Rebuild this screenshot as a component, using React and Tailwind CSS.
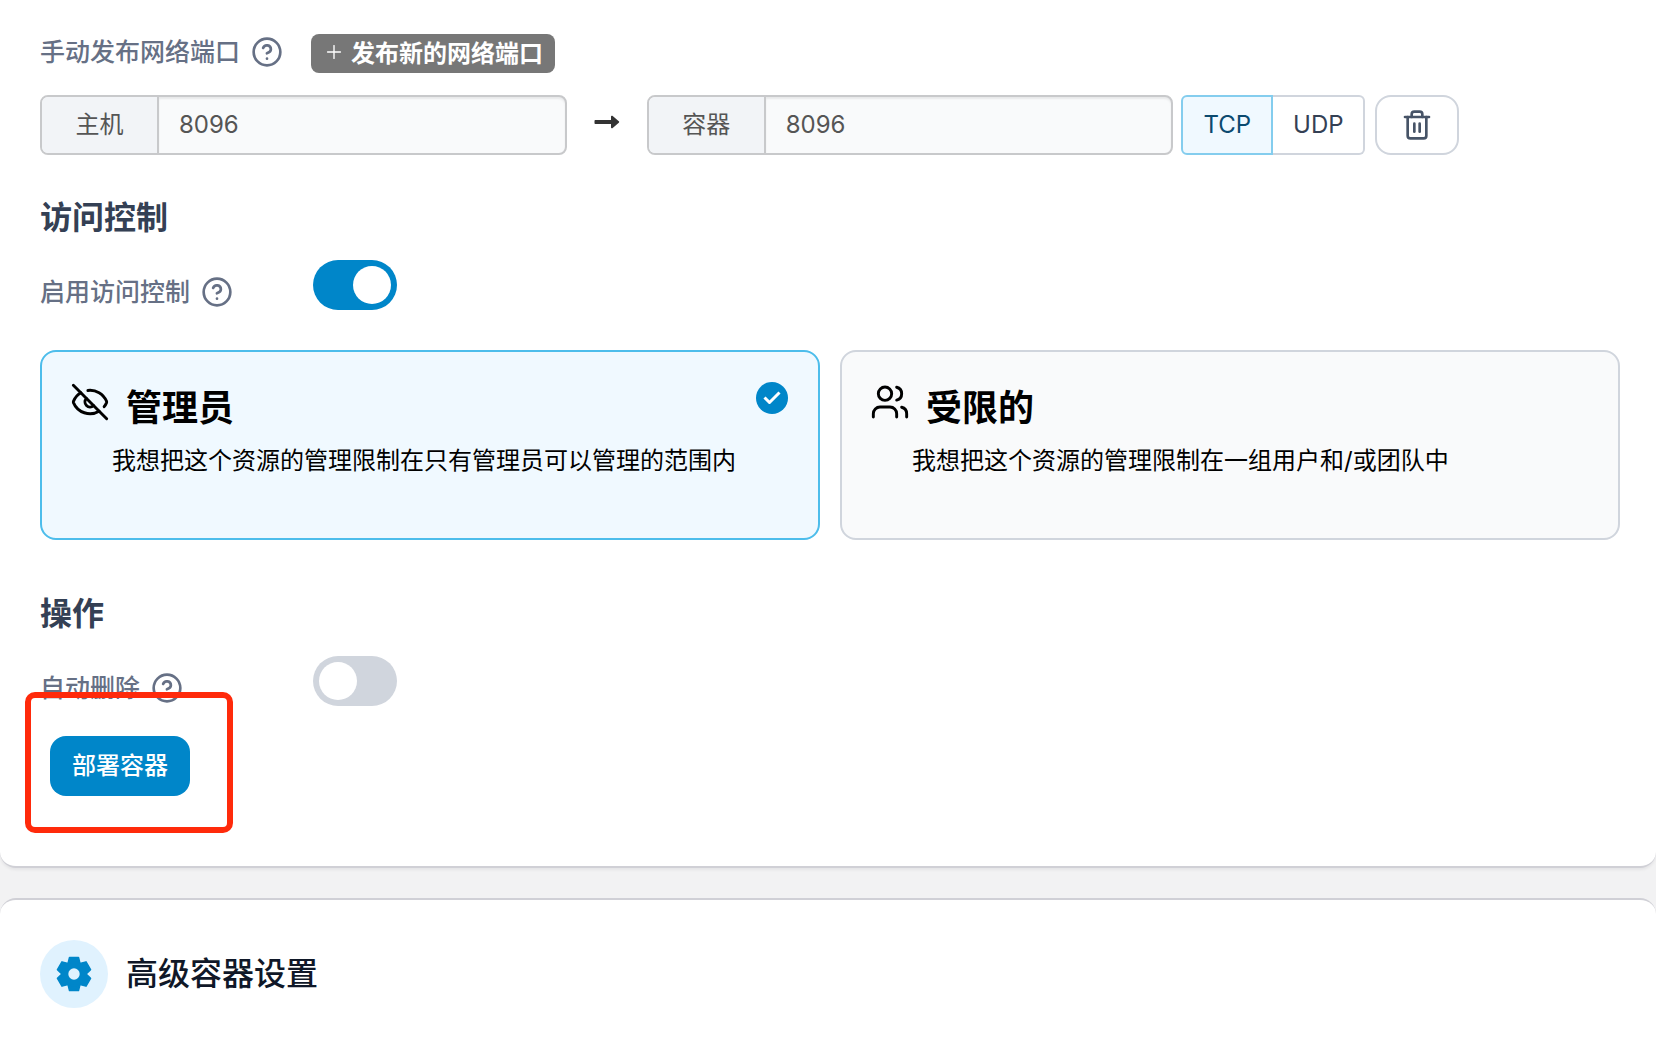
import { useState } from "react";
import { CircleHelp, EyeOff, Plus, Trash2, Users } from "lucide-react";

function FieldLabel({ htmlFor, children }) {
  return (
    <div className="flex items-center gap-[11px] text-[#667085]">
      <label htmlFor={htmlFor} className="text-[25px] leading-9 font-medium">
        {children}
      </label>
      <CircleHelp size={32} strokeWidth={2} />
    </div>
  );
}

function PortInput({ id, label, value, onChange }) {
  return (
    <div className="flex h-15 w-1/3 rounded-lg border-2 border-[#c8c9cb] bg-[#f9fafb] text-2xl text-[#555555]">
      <label
        htmlFor={id}
        className="flex w-[117px] shrink-0 items-center justify-center rounded-l-md border-r-2 border-[#c8c9cb] bg-[#f2f4f7]"
      >
        {label}
      </label>
      <input
        id={id}
        type="text"
        value={value}
        onChange={(e) => onChange(e.target.value)}
        className="min-w-0 flex-1 rounded-r-md px-5 shadow-[inset_0_2px_2px_rgba(0,0,0,0.07)] outline-none"
      />
    </div>
  );
}

function Toggle({ id, checked, onChange }) {
  return (
    <span className="relative inline-flex h-[50px] w-[84px]">
      <input
        id={id}
        type="checkbox"
        role="switch"
        checked={checked}
        onChange={(e) => onChange(e.target.checked)}
        className="peer h-full w-full cursor-pointer appearance-none rounded-full bg-[#d0d5dd] checked:bg-[#0086c9]"
      />
      <span className="pointer-events-none absolute top-1.5 left-1.5 size-[38px] rounded-full bg-white peer-checked:right-1.5 peer-checked:left-auto" />
    </span>
  );
}

function CheckBadge() {
  return (
    <svg viewBox="0 0 32 32" className="size-8 shrink-0" aria-hidden="true">
      <circle cx="16" cy="16" r="16" fill="#0086c9" />
      <path
        d="M8.500 15.500l5 5 10-10"
        fill="none"
        stroke="#fff"
        strokeWidth="3"
        strokeLinejoin="round"
      />
    </svg>
  );
}

function GearIcon() {
  // two opposite teeth per bar, turned three times
  const bar = "M13.500 1.500h9l1.500 6v21l-1.500 6h-9l-1.500-6v-21z";

  return (
    <svg viewBox="0 0 36 36" className="size-9" aria-hidden="true">
      <g fill="#0086c9" stroke="#0086c9" strokeWidth="1.5" strokeLinejoin="round">
        <path d={bar} />
        <path d={bar} transform="rotate(60 18 18)" />
        <path d={bar} transform="rotate(120 18 18)" />
        <circle cx="18" cy="18" r="11.5" />
      </g>
      <circle cx="18" cy="18" r="5.7" fill="#e0f2fe" />
    </svg>
  );
}

function AccessOption({ icon: Icon, value, title, body, selected, onSelect }) {
  return (
    <label
      className={
        selected
          ? "relative flex h-[190px] flex-1 cursor-pointer items-start rounded-2xl border-2 border-[#4dbdeb] bg-[#f0f9ff] py-[30px] pr-[30px] pl-7 text-black"
          : "relative flex h-[190px] flex-1 cursor-pointer items-start rounded-2xl border-2 border-[#d0d5dd] bg-[#f9fafb] py-[30px] pr-[30px] pl-7 text-black"
      }
    >
      <input
        type="radio"
        name="ownership"
        value={value}
        checked={selected}
        onChange={() => onSelect(value)}
        className="sr-only"
      />
      <span className="flex-1">
        <span className="flex items-start gap-4">
          <Icon size={40} strokeWidth={1.75} />
          <span className="pt-1 text-[36px] leading-[44px] font-bold">{title}</span>
        </span>
        <span className="mt-[15px] block pl-[42px] text-2xl leading-8">{body}</span>
      </span>
      {selected && <CheckBadge />}
    </label>
  );
}

export default function App() {
  const [hostPort, setHostPort] = useState("8096");
  const [containerPort, setContainerPort] = useState("8096");
  const [protocol, setProtocol] = useState("TCP");
  const [accessControl, setAccessControl] = useState(true);
  const [autoRemove, setAutoRemove] = useState(false);
  const [ownership, setOwnership] = useState("administrators");

  const options = [
    {
      value: "administrators",
      icon: EyeOff,
      title: "管理员",
      body: "我想把这个资源的管理限制在只有管理员可以管理的范围内",
    },
    {
      value: "restricted",
      icon: Users,
      title: "受限的",
      body: "我想把这个资源的管理限制在一组用户和/或团队中",
    },
  ];

  return (
    <main className="flex min-h-screen flex-col gap-[30px] bg-[#f2f2f3] font-[Inter,'Noto_Sans_CJK_SC',sans-serif]">
      <section className="rounded-b-2xl border-b-2 border-[#d0d0d6] bg-white pt-[34px] pr-9 pb-[70px] pl-10 shadow-[0_2px_3px_rgba(16,24,40,0.06)]">
        <div className="flex items-start gap-7">
          <FieldLabel htmlFor="host-port">手动发布网络端口</FieldLabel>
          <button
            type="button"
            className="flex h-[39px] items-center gap-1.5 rounded-lg bg-[#777777] px-3 text-2xl font-bold text-white"
          >
            <Plus size={22} strokeWidth={1.5} className="mb-1" />
            发布新的网络端口
          </button>
        </div>

        <div className="mt-[22px] flex items-center">
          <PortInput id="host-port" label="主机" value={hostPort} onChange={setHostPort} />
          <span className="flex w-20 shrink-0 justify-center pb-1.5">
            <svg viewBox="0 0 26 14" className="h-3.5 w-6.5" fill="#333333" aria-hidden="true">
              <path d="M1.5 5h15.5V1.8c0-.9 1-1.3 1.7-.7l6.1 5.2c.5.4.5 1 0 1.4l-6.1 5.2c-.7.6-1.7.2-1.7-.7V9H1.5C.9 9 .5 8.600.5 8V6c0-.6.4-1 1-1z" />
            </svg>
          </span>
          <PortInput
            id="container-port"
            label="容器"
            value={containerPort}
            onChange={setContainerPort}
          />
          <div className="ml-2 flex text-2xl">
            {["TCP", "UDP"].map((name) => (
              <button
                key={name}
                type="button"
                aria-pressed={protocol === name}
                onClick={() => setProtocol(name)}
                className={
                  protocol === name
                    ? "h-15 w-[92px] border-2 border-[#84cdee] bg-[#f0f9ff] text-[#0b4a6f] first:rounded-l-md last:rounded-r-md"
                    : "h-15 w-[92px] border-2 border-[#d0d5dd] bg-white text-[#344054] first:rounded-l-md first:border-r-0 last:rounded-r-md last:border-l-0"
                }
              >
                {name}
              </button>
            ))}
          </div>
          <button
            type="button"
            aria-label="删除"
            className="ml-2.5 flex h-15 w-[84px] items-center justify-center rounded-2xl border-2 border-[#d0d5dd] text-[#475467]"
          >
            <Trash2 size={32} strokeWidth={2} />
          </button>
        </div>

        <h2 className="mt-[41px] text-[32px] leading-[44px] font-semibold text-[#344054]">访问控制</h2>
        <div className="mt-5 flex items-start">
          <div className="w-[273px] pt-3.5">
            <FieldLabel htmlFor="access-control">启用访问控制</FieldLabel>
          </div>
          <Toggle id="access-control" checked={accessControl} onChange={setAccessControl} />
        </div>

        <div className="mt-10 flex gap-5">
          {options.map((option) => (
            <AccessOption
              key={option.value}
              {...option}
              selected={ownership === option.value}
              onSelect={setOwnership}
            />
          ))}
        </div>

        <h2 className="mt-[52px] text-[32px] leading-[44px] font-semibold text-[#344054]">操作</h2>
        <div className="mt-5 flex items-start">
          <div className="w-[273px] pt-3.5">
            <FieldLabel htmlFor="auto-remove">自动删除</FieldLabel>
          </div>
          <Toggle id="auto-remove" checked={autoRemove} onChange={setAutoRemove} />
        </div>

        <div className="relative mt-[30px] ml-2.5 w-fit">
          <button
            type="button"
            className="h-15 w-[140px] rounded-2xl bg-[#0086c9] text-2xl font-medium text-white"
          >
            部署容器
          </button>
          <span className="pointer-events-none absolute -top-11 -right-[43px] -bottom-[37px] -left-[25px] rounded-[10px] border-6 border-[#ff2a0b]" />
        </div>
      </section>

      <section className="flex-1 rounded-t-2xl border-t-2 border-[#d0d0d6] bg-white pt-10 pr-9 pl-10">
        <div className="flex items-center gap-[18px]">
          <span className="flex size-[68px] items-center justify-center rounded-full bg-[#e0f2fe]">
            <GearIcon />
          </span>
          <h2 className="text-[32px] leading-[44px] font-medium text-[#101828]">高级容器设置</h2>
        </div>
      </section>
    </main>
  );
}
